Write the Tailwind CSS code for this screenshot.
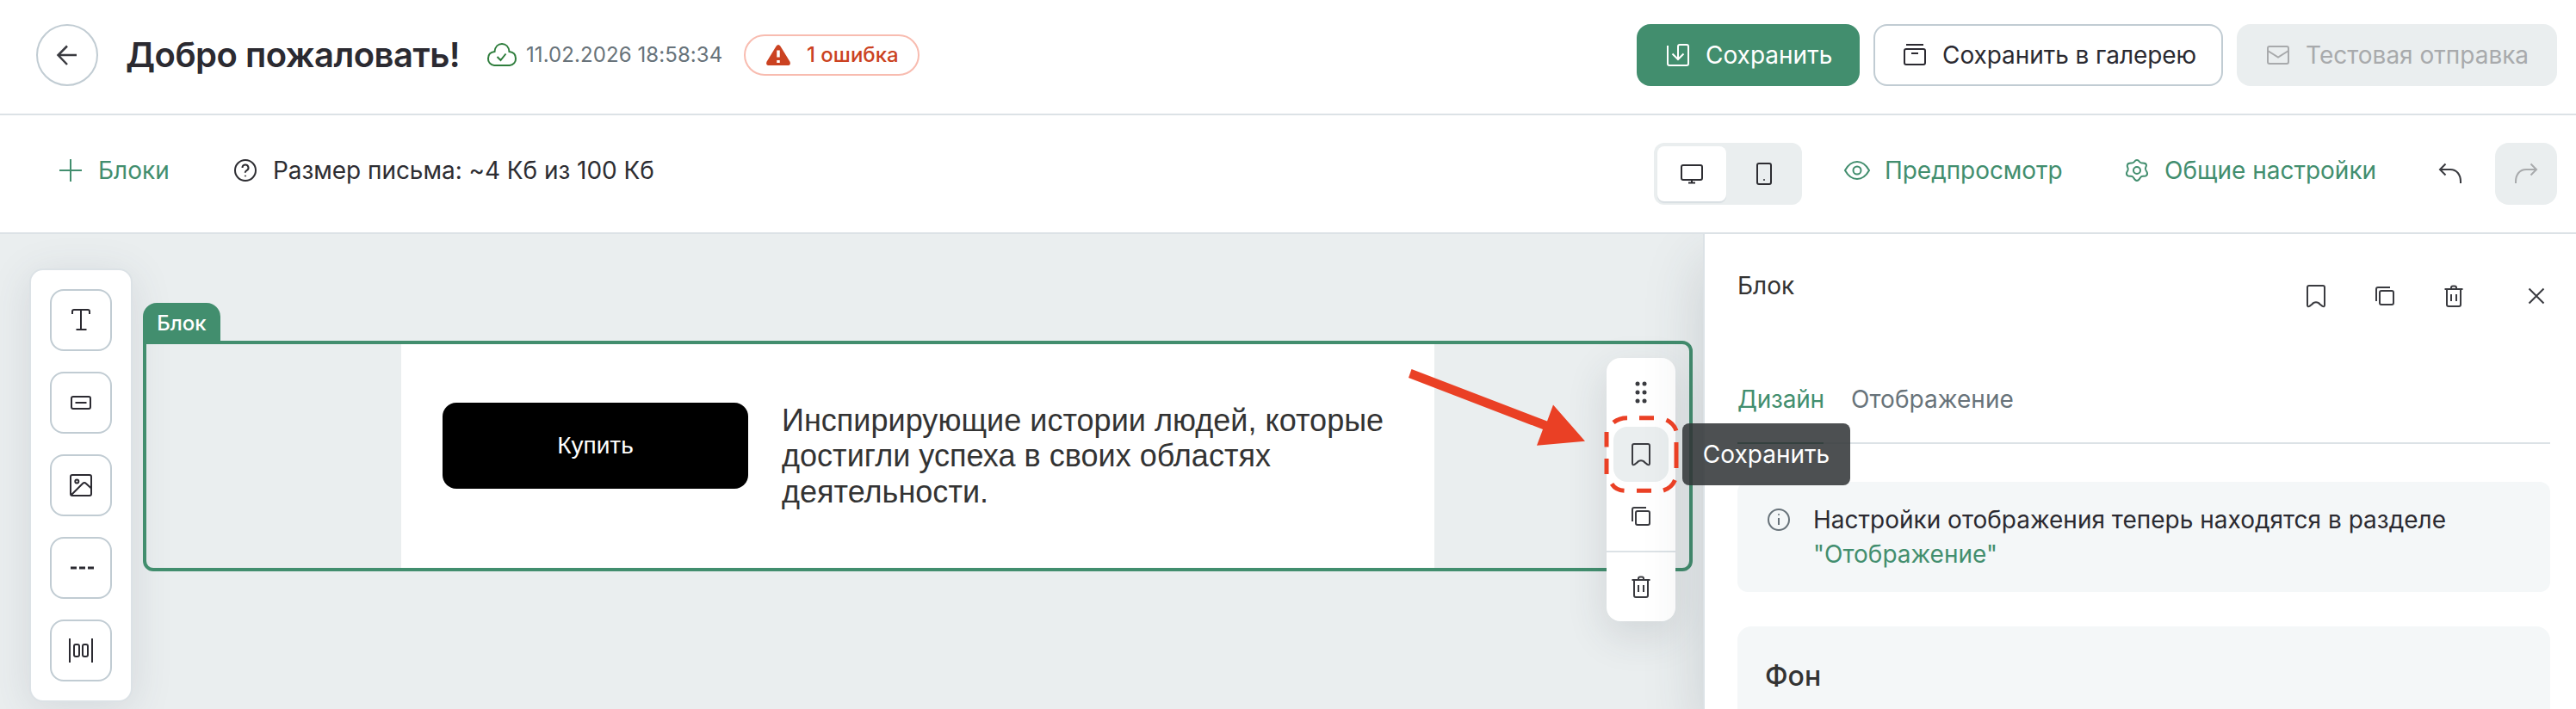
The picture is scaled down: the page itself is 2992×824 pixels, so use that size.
<!DOCTYPE html>
<html lang="ru">
<head>
  <meta charset="UTF-8" />
  <meta name="viewport" content="width=device-width, initial-scale=1.0" />
  <script src="https://cdn.jsdelivr.net/npm/@tailwindcss/browser@4"></script>
  <title>Добро пожаловать!</title>
</head>
<body class="w-[2992px] h-[824px] overflow-hidden flex flex-col bg-white font-[Inter,sans-serif] text-[28px] leading-10 text-[#2b2a31] whitespace-nowrap">

  <!-- Shared icons -->
  <svg class="hidden">
    <symbol id="bookmark" viewBox="0 0 32 32">
      <path d="M8 4h16a2 2 0 0 1 2 2v20.500q0 2.500-2.500 1.300l-3-2.200q-1.500-2.400-4.500-2.400t-4.500 2.400l-3 2.200q-2.500 1.200-2.500-1.300V6a2 2 0 0 1 2-2z" />
    </symbol>
    <symbol id="copy" viewBox="0 0 32 32">
      <rect x="10" y="10" width="16" height="16" rx="2" />
      <path d="M6 22V8a2 2 0 0 1 2-2h14" />
    </symbol>
    <symbol id="trash" viewBox="0 0 32 32">
      <path d="M5.500 8h21M8 8v18a2 2 0 0 0 2 2h12a2 2 0 0 0 2-2V8M13 8V6.500a2 2 0 0 1 2-2h2a2 2 0 0 1 2 2V8M13 14v8M19 14v8" />
    </symbol>
  </svg>

  <!-- Header -->
  <header class="h-[134px] shrink-0 border-b-2 border-[#dce2e6] flex items-center pl-[42px] pr-[22px] pb-1">
    <button class="size-[72px] rounded-full border-2 border-[#c1ccd3] flex items-center justify-center">
      <svg class="size-8" viewBox="0 0 32 32" fill="none" stroke="#3a3b40" stroke-width="2.500"><path d="M27 16H5.500M16 5.500L5.500 16 16 27" /></svg>
    </button>
    <h1 class="ml-8 w-[388px] text-[40px] font-semibold tracking-[-0.5px]">Добро пожаловать!</h1>
    <svg class="ml-[31px] w-9 h-8" viewBox="0 0 36 32" fill="none" stroke="#2e7d3c" stroke-width="2"><path d="M9 28a7.500 7.500 0 0 1-7-8c0-4.500 3-7.500 7.500-8C10 6.500 13.500 3 18 3s8 3.500 8.500 9c4.500.500 7.500 3.500 7.500 8a7.500 7.500 0 0 1-7 8zM12.500 18l4 4 6-7.500" /></svg>
    <span class="ml-2.5 w-[230px] text-2xl tracking-[0.08px] text-[#68737a]">11.02.2026 18:58:34</span>
    <span class="ml-[23px] h-12 w-[204px] rounded-full border-2 border-[#f8bcb0] flex items-center pl-6 text-2xl font-medium text-[#cb4221]">
      <svg class="w-7 h-6 mr-[19px]" viewBox="0 0 28 24"><path d="M11.500 1.800q2.500-3.600 5 0l11 18q1.500 4.200-3 4.200h-21q-4.500 0-3-4.200z" fill="#cb4221" /><path d="M14 6.500v8M14 18v3" stroke="#fff" stroke-width="3.500" /></svg>
      1 ошибка
    </span>

    <div class="ml-auto flex gap-4">
      <button class="h-[72px] w-[259px] rounded-2xl bg-[#428e6e] text-white flex items-center gap-4 pl-8">
        <svg class="size-8" viewBox="0 0 32 32" fill="none" stroke="currentColor" stroke-width="2"><path d="M4 5v21a2 2 0 0 0 2 2h20a2 2 0 0 0 2-2V6a2 2 0 0 0-2-2h-8a2 2 0 0 0-2 2v15M9.500 14.500L16 21l6.500-6.500" /></svg>
        Сохранить
      </button>
      <button class="h-[72px] w-[406px] rounded-2xl border-2 border-[#c1ccd3] flex items-center gap-4 pl-[30px] tracking-[-0.06px]">
        <svg class="size-8" viewBox="0 0 32 32" fill="none" stroke="currentColor" stroke-width="2"><rect x="4" y="9" width="24" height="18" rx="2" /><path d="M6 4h20M12 14h8" /></svg>
        Сохранить в галерею
      </button>
      <button class="h-[72px] w-[372px] rounded-2xl bg-[#eaeeef] text-[#a8aaac] flex items-center gap-4 pl-8">
        <svg class="size-8" viewBox="0 0 32 32" fill="none" stroke="currentColor" stroke-width="2"><rect x="4" y="6" width="24" height="20" rx="2" /><path d="M4 11l12 7.500L28 11" /></svg>
        Тестовая отправка
      </button>
    </div>
  </header>

  <!-- Toolbar -->
  <div class="h-[138px] shrink-0 border-b-2 border-[#dce2e6] flex items-center pl-[66px] pr-[22px] text-[#428e6e]">
    <div class="flex items-center gap-4 pb-2">
      <svg class="size-8" viewBox="0 0 32 32" fill="none" stroke="currentColor" stroke-width="2"><path d="M16 3v26M3 16h26" /></svg>
      <span class="w-[83px]">Блоки</span>
    </div>
    <div class="ml-[72px] flex items-center gap-4 pb-2 text-[#2d2d32]">
      <svg class="size-8" viewBox="0 0 32 32" fill="none" stroke="currentColor" stroke-width="2"><circle cx="16" cy="16" r="12" /><path d="M12.500 13a3.500 3.500 0 1 1 5 3.100q-1.700.900-1.700 2.400v.200" /><circle cx="16" cy="22.500" r=".6" fill="currentColor" stroke-width="1" /></svg>
      <span class="tracking-[-0.05px]">Размер письма: ~4 Кб из 100 Кб</span>
    </div>

    <div class="ml-auto flex items-center">
      <div class="h-[72px] w-[172px] rounded-xl bg-[#eaeeef] p-1 pr-0 flex text-[#2d2d32]">
        <div class="w-20 rounded-lg bg-white shadow-[0_2px_1px_#d8dee2] flex items-center justify-center">
          <svg class="size-8" viewBox="0 0 32 32" fill="none" stroke="currentColor" stroke-width="2"><rect x="4" y="6" width="24" height="17" rx="2" /><path d="M16 23v4M12 26.500h8" /></svg>
        </div>
        <div class="flex-1 flex items-center justify-center">
          <svg class="size-8" viewBox="0 0 32 32" fill="none" stroke="currentColor" stroke-width="2"><rect x="8" y="4" width="16" height="24" rx="2" /><circle cx="16" cy="23" r="1" fill="currentColor" stroke="none" /></svg>
        </div>
      </div>
      <div class="ml-12 flex items-center gap-4 pb-2">
        <svg class="size-8" viewBox="0 0 32 32" fill="none" stroke="currentColor" stroke-width="2"><path d="M2 16q5.500-10 14-10t14 10q-5.500 10-14 10T2 16z" /><circle cx="16" cy="16" r="4.500" /></svg>
        <span class="w-[207px] tracking-[-0.05px]">Предпросмотр</span>
      </div>
      <div class="ml-[70px] flex items-center gap-4 pb-2">
        <svg class="size-8" viewBox="0 0 32 32" fill="none" stroke="currentColor" stroke-width="2"><path d="M16 4q1.600 0 2.800 1.800 1.200 1.800 3.200 1.700 4.800-.3 5 2.500 0 1-.8 2.500-.9 1.700.3 3.500 2.800 4 .5 6-1 1-3.500.8-2.400-.2-3.600 1.700Q18 28 16 28t-3.900-3.500q-1.200-1.900-3.600-1.700-2.500.2-3.500-.8-2.300-2 .5-6 .7-1.800-.3-3.500Q4.600 11 4.800 10q.4-2.800 5.200-2.500 2 .1 3.200-1.700Q14.400 4 16 4z" /><circle cx="16" cy="16" r="4" /></svg>
        <span class="w-[248px]">Общие настройки</span>
      </div>
      <button class="ml-12 size-[72px] flex items-center justify-center">
        <svg class="size-8" viewBox="0 0 32 32" fill="none" stroke="#3a3b40" stroke-width="2"><path d="M28 27v-2c0-8-4.500-14-12-14H4.500M10.500 4.500L4 11l6.500 6.500" /></svg>
      </button>
      <button class="ml-4 size-[72px] rounded-2xl bg-[#eaeeef] flex items-center justify-center">
        <svg class="size-8" viewBox="0 0 32 32" fill="none" stroke="#a8aaac" stroke-width="2"><path d="M4 27v-2c0-8 4.500-14 12-14h11.500M21.500 4.500L28 11l-6.500 6.500" /></svg>
      </button>
    </div>
  </div>

  <div class="flex-1 min-h-0 flex relative">
    <!-- Canvas -->
    <main class="w-[1978px] bg-[#eaeeef] flex items-start pl-[34px]">
      <div class="mt-10 w-[120px] h-[504px] shrink-0 rounded-2xl border-2 border-[#dce2e6] bg-white shadow-[0_8px_48px_rgba(60,70,90,0.13)] flex flex-col items-center gap-6 pt-[22px] text-[#2b2a31]">
        <button class="size-[72px] shrink-0 rounded-2xl border-2 border-[#c1ccd3] flex items-center justify-center">
          <svg class="size-8" viewBox="0 0 32 32" fill="none" stroke="currentColor" stroke-width="2"><path d="M6 9V6a2 2 0 0 1 2-2h16a2 2 0 0 1 2 2v3M16 4v23M10.500 27h12" /></svg>
        </button>
        <button class="size-[72px] shrink-0 rounded-2xl border-2 border-[#c1ccd3] flex items-center justify-center">
          <svg class="size-8" viewBox="0 0 32 32" fill="none" stroke="currentColor" stroke-width="2"><rect x="5" y="9" width="22" height="14" rx="2" /><path d="M9.500 16h13" /></svg>
        </button>
        <button class="size-[72px] shrink-0 rounded-2xl border-2 border-[#c1ccd3] flex items-center justify-center">
          <svg class="size-8" viewBox="0 0 32 32" fill="none" stroke="currentColor" stroke-width="2"><rect x="4" y="4" width="24" height="24" rx="2" /><circle cx="11.300" cy="11.500" r="2" /><path d="M4.500 27.500L18 14q2-2 4 0l6 5.500" /></svg>
        </button>
        <button class="size-[72px] shrink-0 rounded-2xl border-2 border-[#c1ccd3] flex items-center justify-center">
          <svg class="size-8" viewBox="0 0 32 32" fill="none" stroke="currentColor" stroke-width="3"><path d="M4 16h7M14 16h7M24 16h7" /></svg>
        </button>
        <button class="size-[72px] shrink-0 rounded-2xl border-2 border-[#c1ccd3] flex items-center justify-center">
          <svg class="size-8" viewBox="0 0 32 32" fill="none" stroke="currentColor" stroke-width="2"><path d="M3 2v28M29 2v28" /><rect x="8" y="9" width="6" height="14" rx="2" /><rect x="18" y="9" width="6" height="14" rx="2" /></svg>
        </button>
      </div>

      <div class="ml-3 mt-20 w-[1800px]">
        <div class="w-[90px] h-11 rounded-t-2xl bg-[#428e6e] text-white text-2xl font-medium leading-[48px] text-center">Блок</div>
        <div class="h-[268px] rounded-xl rounded-tl-none border-4 border-[#428e6e] pl-[296px]">
          <div class="w-[1200px] h-full bg-white pl-12 flex font-['Liberation_Sans',sans-serif] text-[#333]">
            <div class="mt-[68px] w-[355px] h-[100px] rounded-2xl bg-black text-white text-[28px] flex items-center justify-center">Купить</div>
            <p class="ml-[39px] mt-[68px] text-[36px] leading-[41.4px] tracking-[0.03px]">Инспирирующие истории людей, которые<br />достигли успеха в своих областях<br />деятельности.</p>
          </div>
        </div>
      </div>
    </main>

    <!-- Block actions -->
    <div class="absolute left-[1866px] top-[144px] w-20 h-[306px] rounded-2xl bg-white shadow-[0_16px_48px_rgba(50,60,70,0.14)] flex flex-col items-center gap-2 pt-2 text-[#3a3b40]">
      <div class="size-16 flex items-center justify-center">
        <svg class="size-8" viewBox="0 0 32 32" fill="currentColor"><circle cx="12" cy="6" r="2.500" /><circle cx="20" cy="6" r="2.500" /><circle cx="12" cy="16" r="2.500" /><circle cx="20" cy="16" r="2.500" /><circle cx="12" cy="26" r="2.500" /><circle cx="20" cy="26" r="2.500" /></svg>
      </div>
      <div class="size-16 flex items-center justify-center rounded-2xl bg-[#eaeeef]">
        <svg class="size-8" fill="none" stroke="currentColor" stroke-width="2"><use href="#bookmark" /></svg>
      </div>
      <div class="size-16 flex items-center justify-center">
        <svg class="size-8" fill="none" stroke="currentColor" stroke-width="2"><use href="#copy" /></svg>
      </div>
      <div class="w-full border-t-2 border-[#dce2e6]"></div>
      <div class="size-16 flex items-center justify-center">
        <svg class="size-8" fill="none" stroke="currentColor" stroke-width="2"><use href="#trash" /></svg>
      </div>
    </div>

    <!-- Settings panel -->
    <aside class="flex-1 border-l-2 border-[#dce2e6] bg-white shadow-[0_32px_64px_rgba(50,60,70,0.18)] [clip-path:inset(0_0_0_-120px)] pl-[38px] pr-[30px]">
      <div class="h-[152px] flex justify-between pt-10">
        <h2 class="text-[#333]">Блок</h2>
        <div class="flex h-16 text-[#3a3b40]">
          <svg class="size-8 mt-4 mr-12" fill="none" stroke="currentColor" stroke-width="2"><use href="#bookmark" /></svg>
          <svg class="size-8 mt-4 mr-12" fill="none" stroke="currentColor" stroke-width="2"><use href="#copy" /></svg>
          <svg class="size-8 mt-4 mr-16" fill="none" stroke="currentColor" stroke-width="2"><use href="#trash" /></svg>
          <svg class="size-8 mt-4" viewBox="0 0 32 32" fill="none" stroke="currentColor" stroke-width="2"><path d="M7.500 7.500l17 17M24.500 7.500l-17 17" /></svg>
        </div>
      </div>
      <div class="h-[92px] border-b-2 border-[#dce2e6] flex gap-8 pt-5">
        <div class="h-[72px] w-[100px] border-b-2 border-[#428e6e] text-[#428e6e] tracking-[-0.2px]">Дизайн</div>
        <div class="text-[#68737a] tracking-[0.06px]">Отображение</div>
      </div>
      <div class="mt-11 h-32 rounded-xl bg-[#f4f7f8] pl-8 pt-6 flex gap-6">
        <svg class="size-8 mt-1" viewBox="0 0 32 32" fill="none" stroke="#68737a" stroke-width="2"><circle cx="16" cy="16" r="12" /><path d="M16 14v8" /><circle cx="16" cy="10" r="1" fill="#68737a" stroke="none" /></svg>
        <p>Настройки отображения теперь находятся в разделе<br /><a class="text-[#428e6e]">"Отображение"</a></p>
      </div>
      <div class="mt-10 h-24 rounded-t-2xl bg-[#f4f7f8] pl-8 pt-[38px] text-[32px] font-medium text-[#333]">Фон</div>
    </aside>

    <!-- Tooltip -->
    <div class="absolute left-[1954px] top-[220px] w-[195px] h-[72px] rounded-lg bg-[#323638]/87 text-white leading-[72px] text-center">Сохранить</div>

    <!-- Pointer arrow and highlight -->
    <svg class="absolute left-[1620px] top-[140px] w-[340px] h-[170px]" viewBox="1620 412 340 170">
      <path d="M1639.500 429L1797 489.500L1804 470.500L1841 512.700L1785 517.700L1792 499L1636 439z" fill="#ea4025" />
      <path d="M1874 491q6.500-5.300 16-5.300M1904 485.700h17M1935.500 488q8.500 4 11.500 12.500M1947 514v30M1945.500 558q-4 9-13.500 12M1918 570.300h-17M1886.500 570.300q-9.500-.5-14.500-8M1866 551v-18M1866 519.500v-17.500" fill="none" stroke="#ea4025" stroke-width="5" />
    </svg>
  </div>
</body>
</html>
